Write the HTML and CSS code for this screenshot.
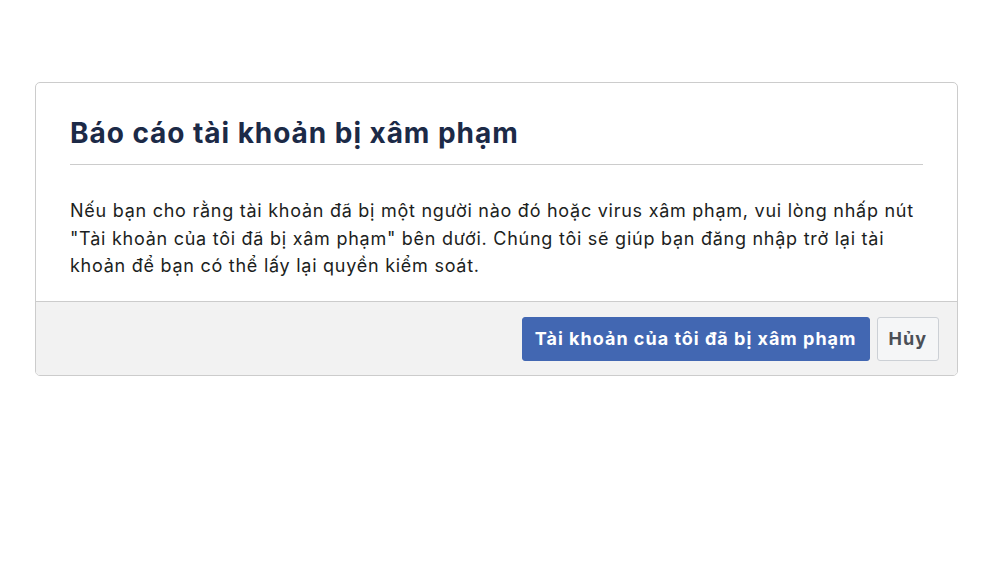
FILE: index.html
```html
<!DOCTYPE html>
<html lang="vi">
<head>
<meta charset="utf-8">
<link rel="stylesheet" href="styles.css">
</head>
<body>
<div class="card">
  <div class="card-head">
    <h1 class="title">Báo cáo tài khoản bị xâm phạm</h1>
  </div>
  <div class="card-body">
    <p class="text">Nếu bạn cho rằng tài khoản đã bị một người nào đó hoặc virus xâm phạm, vui lòng nhấp nút "Tài khoản của tôi đã bị xâm phạm" bên dưới. Chúng tôi sẽ giúp bạn đăng nhập trở lại tài khoản để bạn có thể lấy lại quyền kiểm soát.</p>
  </div>
  <div class="card-foot">
    <button class="btn btn-primary">Tài khoản của tôi đã bị xâm phạm</button>
    <button class="btn btn-cancel">Hủy</button>
  </div>
</div>
</body>
</html>
```
FILE: styles.css
```css
html, body {
  margin: 0;
  padding: 0;
  background: #ffffff;
  font-family: Inter, "Noto Sans", sans-serif;
}
.card {
  box-sizing: border-box;
  width: 923px;
  margin: 82px 0 0 35px;
  border: 1px solid #cccccc;
  border-radius: 5px;
  background: #ffffff;
  overflow: hidden;
}
.card-head {
  padding: 0 34px;
}
.title {
  margin: 0;
  padding: 32px 0 13px;
  font-size: 28px;
  line-height: 36px;
  font-weight: 700;
  color: #1c2a47;
  border-bottom: 1px solid #cccccc;
  letter-spacing: 0.95px;
}
.card-body {
  padding: 32px 34px 21px;
}
.text {
  margin: 0;
  font-size: 18px;
  line-height: 27.5px;
  letter-spacing: 0.74px;
  color: #1c1e21;
}
.card-foot {
  display: flex;
  justify-content: flex-end;
  gap: 7px;
  padding: 15px 18px 14px;
  background: #f2f2f2;
  border-top: 1px solid #cccccc;
}
.btn {
  font-family: inherit;
  font-weight: 700;
  font-size: 18px;
  letter-spacing: 1px;
  height: 44px;
  border-radius: 3px;
  cursor: pointer;
}
.btn-primary {
  padding: 0 12px;
  background: #4267b2;
  border: 1px solid #4267b2;
  color: #ffffff;
}
.btn-cancel {
  padding: 0 11px;
  background: #f5f6f7;
  border: 1px solid #ccd0d5;
  color: #4b4f56;
}
```
